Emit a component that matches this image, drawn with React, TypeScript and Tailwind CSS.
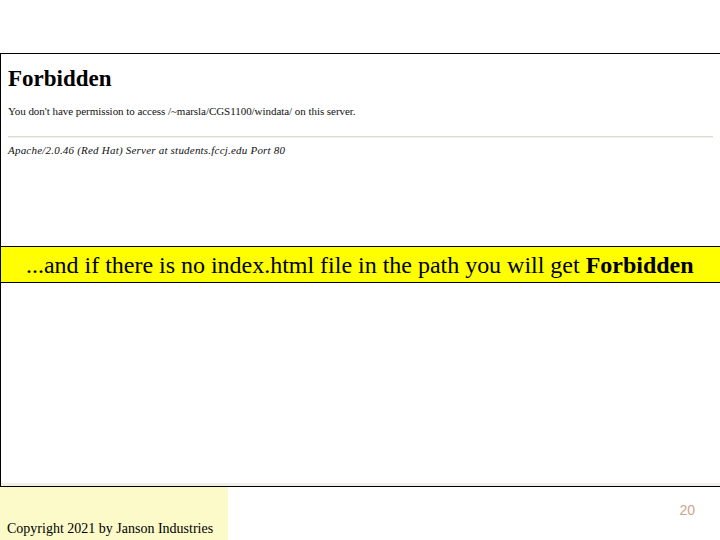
function ServerError() {
  return (
    <section className="h-[192px] pt-[11px] pr-[7px] pl-[7px] text-[#111]">
      <h1 className="text-[23px] leading-7 font-bold text-black">Forbidden</h1>
      <p className="mt-2.5 text-[11px] leading-4 tracking-[-0.045px] whitespace-nowrap">
        You don't have permission to access /~marsla/CGS1100/windata/ on this server.
      </p>
      <hr className="mt-[17px] h-0.5 border-t border-[#dddcd2] bg-[#f0efe9]" />
      <address className="mt-1 text-[11px] leading-4 tracking-[0.21px] whitespace-nowrap italic">
        Apache/2.0.46 (Red Hat) Server at students.fccj.edu Port 80
      </address>
    </section>
  );
}

export default function App() {
  return (
    <main className="flex h-[540px] w-[720px] flex-col overflow-hidden bg-white pt-[53px] font-['Liberation_Serif',serif] text-black">
      <div className="flex h-[434px] flex-col border-y border-l border-black">
        <ServerError />
        <div className="h-[37px] border-y border-black bg-[#ffff00] pl-[25px] text-[24px] leading-9 tracking-[-0.015px] whitespace-nowrap">
          ...and if there is no index.html file in the path you will get <b>Forbidden</b>
        </div>
        <div className="mt-auto h-[3px] bg-[#f0efe8]" />
      </div>
      <footer className="flex h-[53px] justify-between">
        <div className="w-[228px] bg-[#fbfac8] pt-8 pl-[7px] text-[14px] leading-5 whitespace-nowrap">
          Copyright 2021 by Janson Industries
        </div>
        <span className="pt-[13px] pr-[25px] font-['Liberation_Sans',sans-serif] text-[14px] leading-5 text-[#c9a58c]">
          20
        </span>
      </footer>
    </main>
  );
}
